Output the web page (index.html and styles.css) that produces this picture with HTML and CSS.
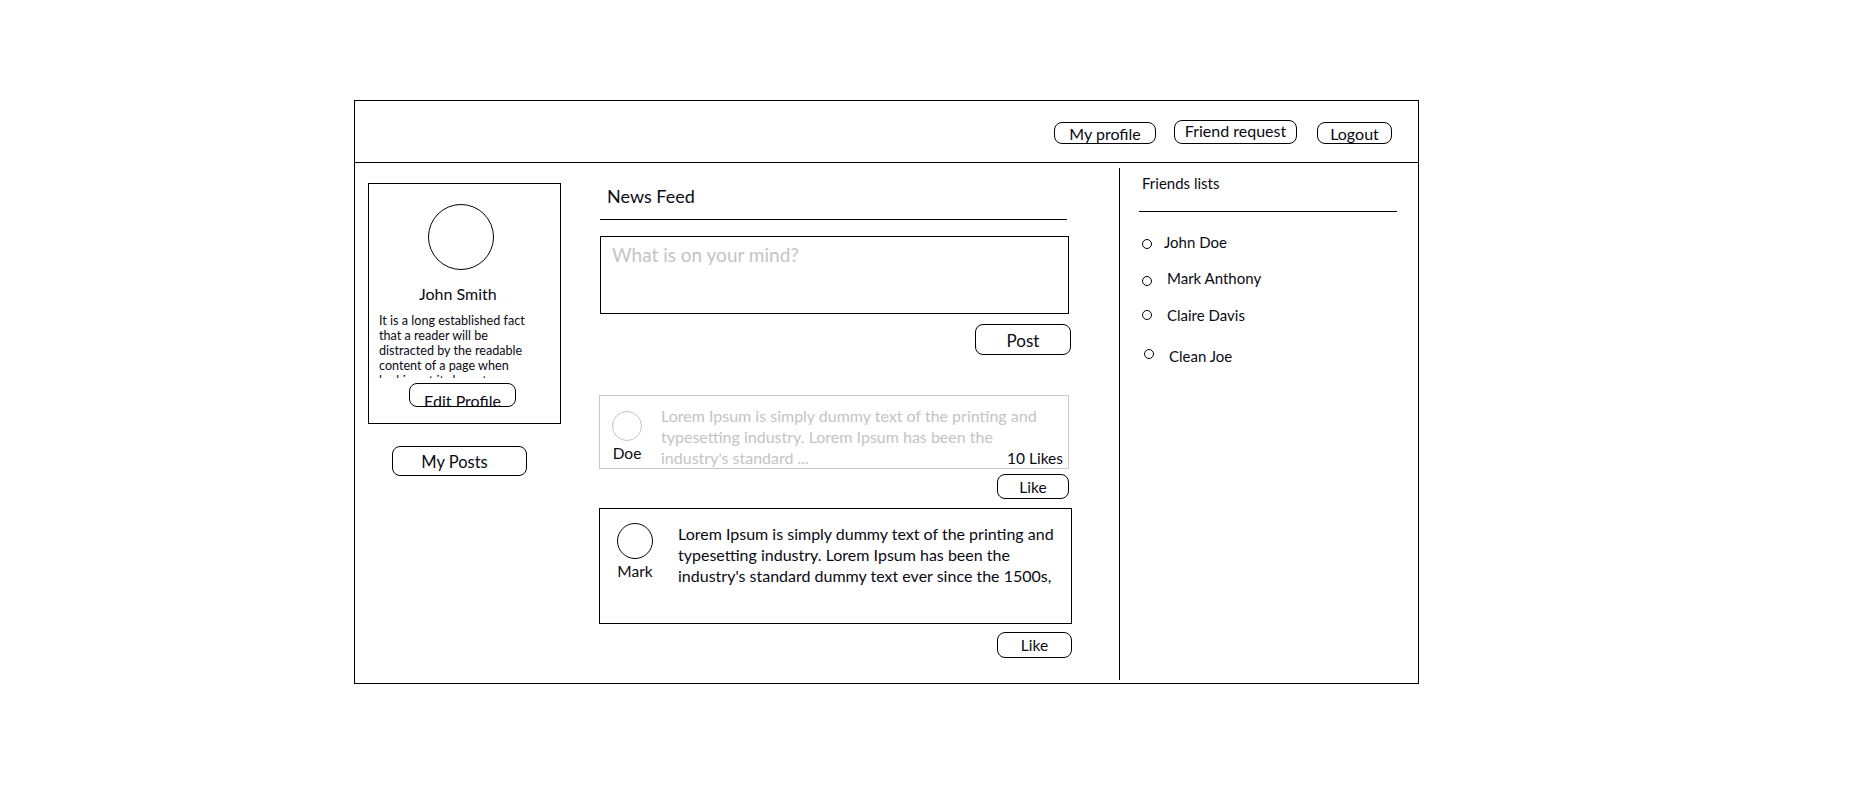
FILE: index.html
```html
<!DOCTYPE html>
<html lang="en">
<head>
<meta charset="utf-8">
<title>News Feed</title>
<link rel="stylesheet" href="styles.css">
</head>
<body>
<div class="frame">
  <header class="topbar">
    <span class="btn btn-profile">My profile</span>
    <span class="btn btn-request">Friend request</span>
    <span class="btn btn-logout">Logout</span>
  </header>
  <div class="main">
    <aside class="left">
      <div class="card">
        <div class="avatar-lg"></div>
        <div class="name">John Smith</div>
        <p class="bio">It is a long established fact<br>that a reader will be<br>distracted by the readable<br>content of a page when<br>looking at its layout.</p>
        <span class="btn btn-edit"><span class="btn-edit-label">Edit Profile</span></span>
      </div>
      <span class="btn btn-posts">My Posts</span>
    </aside>
    <section class="feed">
      <h2 class="feed-title">News Feed</h2>
      <div class="feed-rule"></div>
      <div class="composer">What is on your mind?</div>
      <div class="row-end"><span class="btn btn-post">Post</span></div>

      <article class="post post-faded">
        <div class="author author-doe">
          <div class="avatar avatar-faded"></div>
          <div class="author-name">Doe</div>
        </div>
        <p class="post-text post-text-faded">Lorem Ipsum is simply dummy text of the printing and<br>typesetting industry. Lorem Ipsum has been the<br>industry's standard ...</p>
        <span class="likes">10 Likes</span>
      </article>
      <div class="row-end"><span class="btn btn-like btn-like-1">Like</span></div>

      <article class="post post-solid">
        <div class="author author-mark">
          <div class="avatar avatar-mark"></div>
          <div class="author-name">Mark</div>
        </div>
        <p class="post-text post-text-solid">Lorem Ipsum is simply dummy text of the printing and<br>typesetting industry. Lorem Ipsum has been the<br>industry's standard dummy text ever since the 1500s,</p>
      </article>
      <div class="row-end"><span class="btn btn-like btn-like-2">Like</span></div>
    </section>
    <aside class="friends">
      <div class="friends-title">Friends lists</div>
      <div class="friends-rule"></div>
      <ul class="friend-list">
        <li class="friend friend-1"><span class="dot"></span><span class="friend-name">John Doe</span></li>
        <li class="friend friend-2"><span class="dot"></span><span class="friend-name">Mark Anthony</span></li>
        <li class="friend friend-3"><span class="dot"></span><span class="friend-name">Claire Davis</span></li>
        <li class="friend friend-4"><span class="dot"></span><span class="friend-name">Clean Joe</span></li>
      </ul>
    </aside>
  </div>
</div>
</body>
</html>
```

FILE: styles.css
```css
* { box-sizing: border-box; }

body {
  margin: 0;
  background: #fff;
  color: #0a0a14;
  font-family: Lato, "Open Sans", "Noto Sans", sans-serif;
}

.frame {
  margin: 100px 0 0 354px;
  width: 1065px;
  height: 584px;
  border: 1px solid #000;
  display: flex;
  flex-direction: column;
}

/* ---------- buttons ---------- */
.btn {
  display: inline-flex;
  align-items: center;
  justify-content: center;
  border: 1px solid #000;
  border-radius: 8px;
  background: #fff;
  white-space: nowrap;
}

/* ---------- header ---------- */
.topbar {
  height: 62px;
  flex: none;
  border-bottom: 1px solid #000;
  display: flex;
  justify-content: flex-end;
  align-items: flex-start;
  padding: 21px 26px 0 0;
  font-size: 16px;
}
.btn-profile { width: 102px; height: 22px; padding-top: 1px; }
.btn-request { width: 123px; height: 24px; margin: -2px 0 0 18px; padding-bottom: 3px; }
.btn-logout { width: 75px; height: 22px; margin-left: 20px; padding-top: 1px; }

/* ---------- main ---------- */
.main {
  flex: 1;
  display: flex;
  min-height: 0;
}

/* ---------- left column ---------- */
.left {
  width: 244px;
  flex: none;
  padding: 20px 0 0 13px;
  display: flex;
  flex-direction: column;
  align-items: flex-start;
}
.card {
  width: 193px;
  height: 241px;
  border: 1px solid #000;
  padding-top: 20px;
  display: flex;
  flex-direction: column;
  align-items: flex-start;
}
.avatar-lg {
  width: 66px;
  height: 66px;
  border: 1px solid #000;
  border-radius: 50%;
  margin-left: 59px;
}
.name {
  margin: 14px 0 0 50px;
  font-size: 16px;
  line-height: 20px;
}
.bio {
  margin: 8px 0 0 10px;
  height: 66px;
  overflow: hidden;
  font-size: 12.6px;
  line-height: 15px;
  padding-top: 1px;
}
.btn-edit {
  display: block;
  margin: 5px 0 0 40px;
  width: 107px;
  height: 24px;
  overflow: hidden;
  text-align: center;
  padding-top: 8px;
}
.btn-edit-label {
  display: block;
  font-size: 16px;
  line-height: 17px;
}
.btn-posts {
  margin: 22px 0 0 24px;
  width: 135px;
  height: 30px;
  font-size: 16.5px;
  padding: 2px 10px 0 0;
}

/* ---------- feed ---------- */
.feed {
  width: 474px;
  flex: none;
  padding-top: 22px;
  display: flex;
  flex-direction: column;
}
.feed-title {
  margin: 0 0 0 8px;
  font-size: 18px;
  font-weight: 400;
  line-height: 22px;
}
.feed-rule {
  margin: 12px 0 0 1px;
  width: 467px;
  border-top: 1px solid #000;
}
.composer {
  margin: 16px 0 0 1px;
  width: 469px;
  height: 78px;
  border: 1px solid #000;
  padding: 6px 0 0 11px;
  font-size: 19px;
  line-height: 23px;
  color: #c4c4c4;
}
.row-end {
  display: flex;
  justify-content: flex-end;
}
.btn-post {
  margin: 10px 2px 0 0;
  width: 96px;
  height: 31px;
  font-size: 17px;
  padding-top: 1px;
}

.post {
  position: relative;
  display: flex;
  align-items: flex-start;
  border: 1px solid #000;
}
.post-faded {
  margin-top: 40px;
  width: 470px;
  height: 74px;
  border-color: #c8c8c8;
}
.post-solid {
  margin-top: 9px;
  width: 473px;
  height: 116px;
}
.author {
  width: 40px;
  flex: none;
  display: flex;
  flex-direction: column;
  align-items: center;
}
.author-doe { margin: 15px 0 0 7px; }
.author-mark { margin: 14px 0 0 15px; }
.avatar {
  border-radius: 50%;
  border: 1px solid #000;
}
.avatar-faded {
  width: 30px;
  height: 30px;
  border-color: #c4c4c4;
}
.avatar-mark {
  width: 36px;
  height: 36px;
}
.author-name {
  font-size: 15.5px;
  line-height: 20px;
  margin-top: 2px;
}
.post-text {
  margin: 0;
  font-size: 16px;
  line-height: 21px;
  white-space: nowrap;
}
.post-text-faded {
  margin: 9px 0 0 14px;
  color: #c4c4c4;
}
.post-text-solid {
  margin: 14px 0 0 23px;
}
.likes {
  position: absolute;
  right: 5px;
  bottom: 0;
  font-size: 15.5px;
  line-height: 20px;
}
.btn-like {
  margin-top: 5px;
  width: 72px;
  height: 25px;
  font-size: 15.5px;
}
.btn-like-1 { margin: 5px 4px 0 0; }
.btn-like-2 { margin: 8px 1px 0 0; width: 75px; height: 26px; }

/* ---------- friends ---------- */
.friends {
  flex: 1;
  margin: 5px 21px 3px 46px;
  border-left: 1px solid #000;
  padding: 6px 0 0 19px;
}
.friends-title {
  margin-left: 3px;
  font-size: 15px;
  line-height: 18px;
}
.friends-rule {
  margin-top: 19px;
  width: 258px;
  border-top: 1px solid #000;
}
.friend-list {
  list-style: none;
  margin: 0;
  padding: 0;
  font-size: 15px;
}
.friend {
  display: flex;
  align-items: center;
  height: 18px;
  line-height: 18px;
}
.dot {
  width: 10px;
  height: 10px;
  border: 1px solid #000;
  border-radius: 50%;
  margin-left: 3px;
  flex: none;
}
.friend-1 { margin-top: 21px; }
.friend-1 .dot { margin-top: 4px; }
.friend-1 .friend-name { margin-left: 12px; }
.friend-2 { margin-top: 18px; }
.friend-2 .dot { margin-top: 6px; }
.friend-2 .friend-name { margin-left: 15px; }
.friend-3 { margin-top: 19px; }
.friend-3 .friend-name { margin-left: 15px; }
.friend-4 { margin-top: 23px; }
.friend-4 .dot { margin: -4px 0 0 5px; }
.friend-4 .friend-name { margin-left: 15px; }
```
